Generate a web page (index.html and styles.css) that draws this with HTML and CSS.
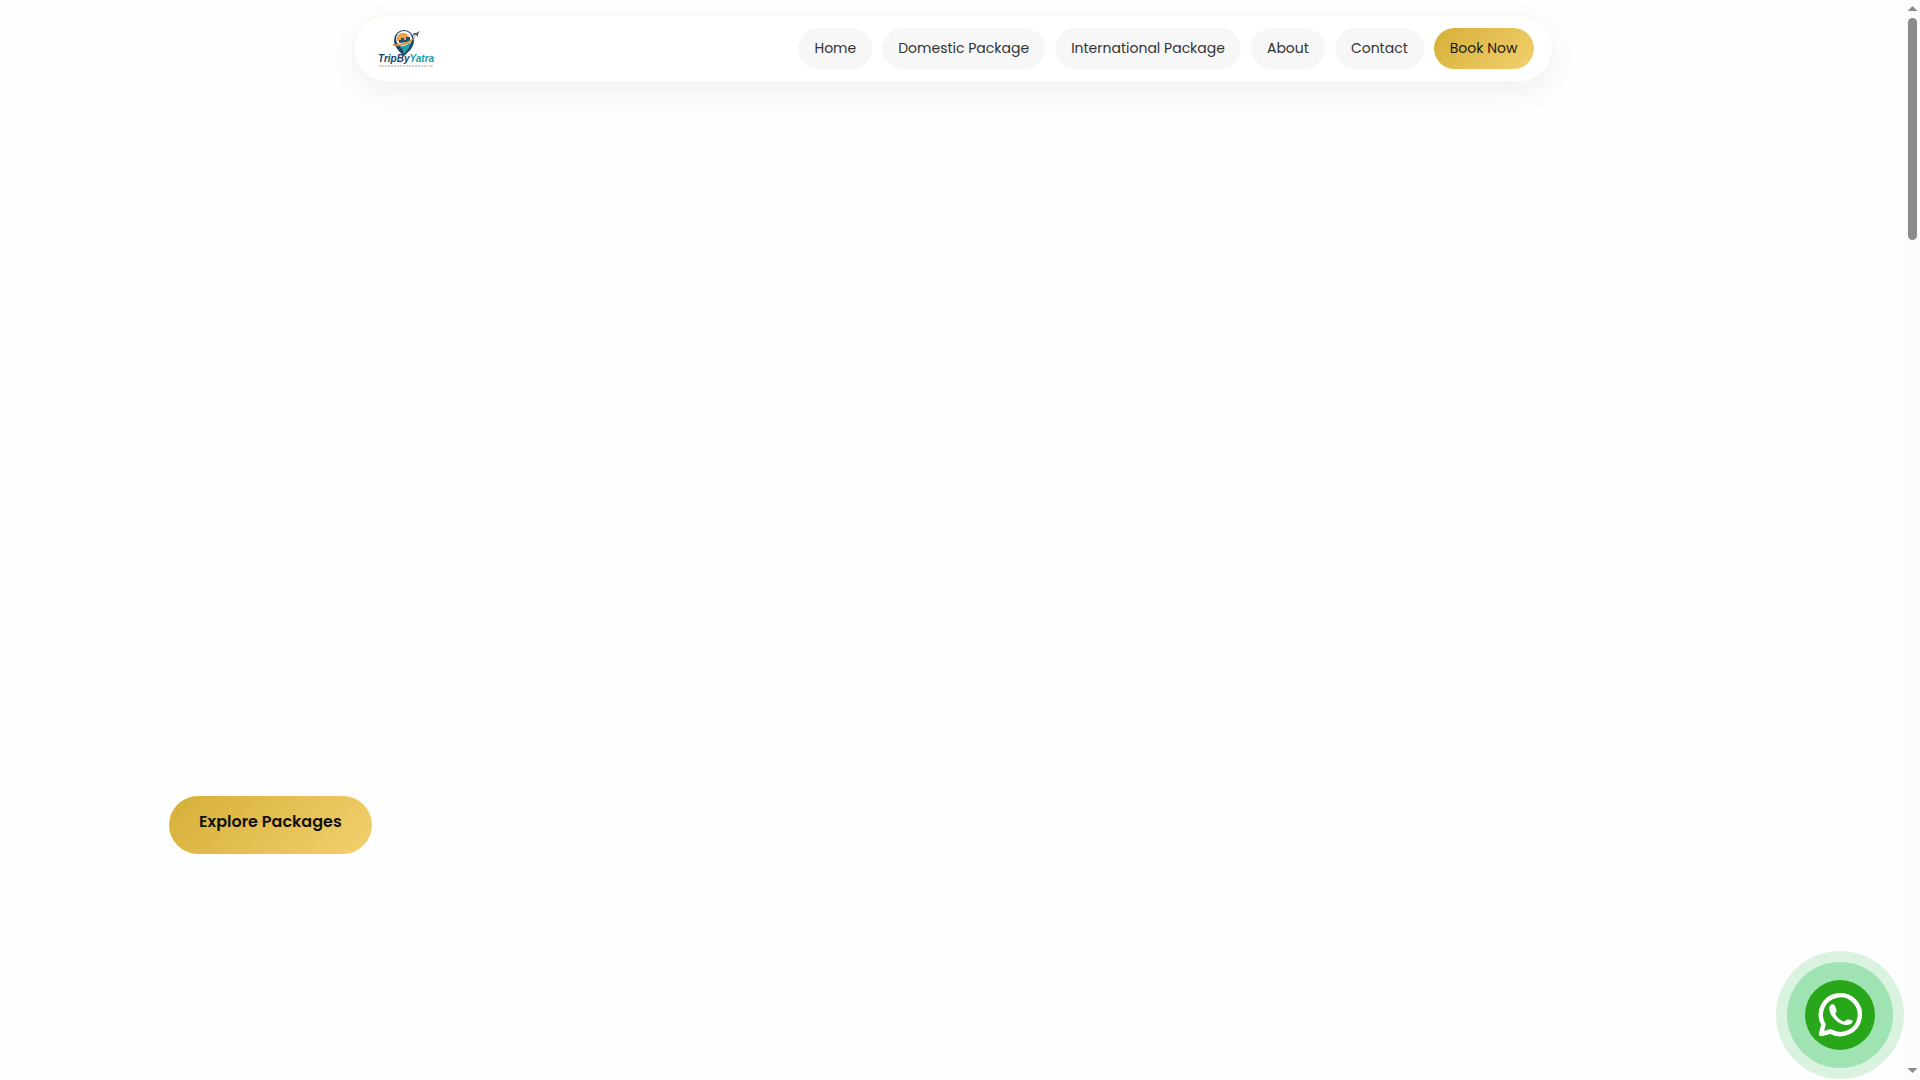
FILE: index.html
```html
<!DOCTYPE html>
<html lang="en">
<head>
<meta charset="utf-8">
<meta name="viewport" content="width=device-width, initial-scale=1">
<title>TripByYatra</title>
<link rel="stylesheet" href="styles.css">
</head>
<body>
<div class="page">
  <header class="site-header">
    <a class="brand" href="#" aria-label="TripByYatra home">
      <svg class="brand-logo" viewBox="0 0 56 40" aria-hidden="true">
        <path d="M26 27C19 21 16 16 16 11a10 10 0 0 1 20 0c0 6-3 10-10 16z" fill="#1d4468"/>
        <circle cx="26" cy="10" r="8" fill="#fff"/>
        <path d="M19 12a6 6 0 0 1 12-4l-2 5z" fill="#f2a04a"/>
        <path d="M21 14v-3h2v-2h3v2h2V8h4v5z" fill="#24506f"/>
        <path d="M22 18c4-1 8-3 11-5-1 5-4 9-7 12-1-3-1-5-4-7z" fill="#25a0a6"/>
        <path d="M15 15c8 1 16-2 24-9-5 8-14 12-24 11z" fill="#e88b36"/>
        <path d="M34 4l4 0 4-2-2 3 0 3-2-2-4 1 2-2z" fill="#51616d"/>
        <text x="0" y="33" class="logo-name"><tspan fill="#17446e">TripBy</tspan><tspan fill="#239aa2">Yatra</tspan></text>
        <path d="M1 37h5M51 37h4" stroke="#e9a05c"/>
        <path d="M7 37h43" stroke="#8ba3ae" stroke-dasharray="2 1"/>
      </svg>
    </a>
    <nav class="nav" aria-label="Main">
      <a class="nav-link" href="#">Home</a>
      <a class="nav-link" href="#">Domestic Package</a>
      <a class="nav-link" href="#">International Package</a>
      <a class="nav-link" href="#">About</a>
      <a class="nav-link" href="#">Contact</a>
      <a class="nav-link nav-book" href="#">Book Now</a>
    </nav>
  </header>
  <main class="hero">
    <a class="explore" href="#">Explore Packages</a>
  </main>
  <a class="whatsapp" href="#" aria-label="Chat on WhatsApp">
    <svg class="whatsapp-icon" viewBox="0 0 44 44" aria-hidden="true">
      <path d="M3 41L5.500 31.500A19.500 19.500 0 1 1 12.500 38.500Z" fill="none" stroke="#fff" stroke-width="4.400" stroke-linejoin="round"/>
      <path d="M11.500 14c.5-3 4.500-4 5.500-1l1.500 4c.5 2-1.500 3-1 4.500 2 3.500 5 6 8.500 7 1.500 0 2-2 4-2l3.500.5c2 .5 1 3-1 4-4 2.500-10 .5-14.500-3.500-4.500-4-7.500-9-6.500-13.500z" fill="#fff"/>
    </svg>
  </a>
</div>
<div class="rail" aria-hidden="true">
  <span class="rail-arrow rail-up"></span>
  <span class="rail-thumb"></span>
  <span class="rail-arrow rail-down"></span>
</div>
</body>
</html>
```

FILE: styles.css
```css
* { box-sizing: border-box; }

body {
  margin: 0;
  display: flex;
  height: 100vh;
  background: #fefefe;
  color: #333;
  font-family: Poppins, Inter, sans-serif;
}

a { text-decoration: none; }

.page {
  position: relative;
  flex: 1;
  min-width: 0;
  display: flex;
  flex-direction: column;
  overflow: hidden;
  padding-top: 15px;
}

.site-header {
  width: 100%;
  max-width: 1200px;
  margin: 0 auto;
  padding: 12px 18px 12px 24px;
  display: flex;
  align-items: center;
  justify-content: space-between;
  border: 1px solid #faf6e8;
  border-radius: 50px;
  background: #fff;
  box-shadow: 0 10px 30px rgba(0, 0, 0, 0.06);
}

.brand { display: flex; }

.brand-logo {
  width: 56px;
  height: 40px;
  overflow: visible;
}

.logo-name {
  font: italic 700 10px "Liberation Sans", sans-serif;
}

.nav {
  display: flex;
  gap: 10px;
}

.nav-link {
  padding: 8px 16px 9px;
  border-radius: 25px;
  background: #f7f7f7;
  color: #333;
  font-size: 14px;
  line-height: 24px;
}

.nav-book {
  background: linear-gradient(135deg, #d4af37, #f4d06f);
  color: #1a1a1a;
}

.hero {
  flex: 1;
  display: flex;
  align-items: flex-end;
  padding: 0 169px 226px;
}

.explore {
  padding: 14px 30px 20px;
  border-radius: 30px;
  background: linear-gradient(135deg, #d4af37, #f4d06f);
  color: #111;
  font-size: 16px;
  font-weight: 600;
  line-height: 24px;
}

.whatsapp {
  position: absolute;
  right: 30px;
  bottom: 30px;
  display: flex;
  align-items: center;
  justify-content: center;
  width: 70px;
  height: 70px;
  border-radius: 50%;
  background: #29a71a;
  box-shadow: 0 0 0 18px #a0e3b3, 0 0 0 29px #daf3e0;
}

.whatsapp-icon {
  width: 44px;
  height: 44px;
}

.rail {
  width: 15px;
  display: flex;
  flex-direction: column;
  align-items: center;
  padding: 6px 0 7px;
  background: #fcfcfc;
}

.rail-arrow {
  width: 10px;
  height: 5px;
  background: #8b8b8b;
}

.rail-up { clip-path: polygon(50% 0, 100% 100%, 0 100%); }

.rail-down {
  margin-top: auto;
  clip-path: polygon(0 0, 100% 0, 50% 100%);
}

.rail-thumb {
  width: 9px;
  height: 222px;
  margin-top: 7px;
  border-radius: 5px;
  background: #8b8b8b;
}
```
